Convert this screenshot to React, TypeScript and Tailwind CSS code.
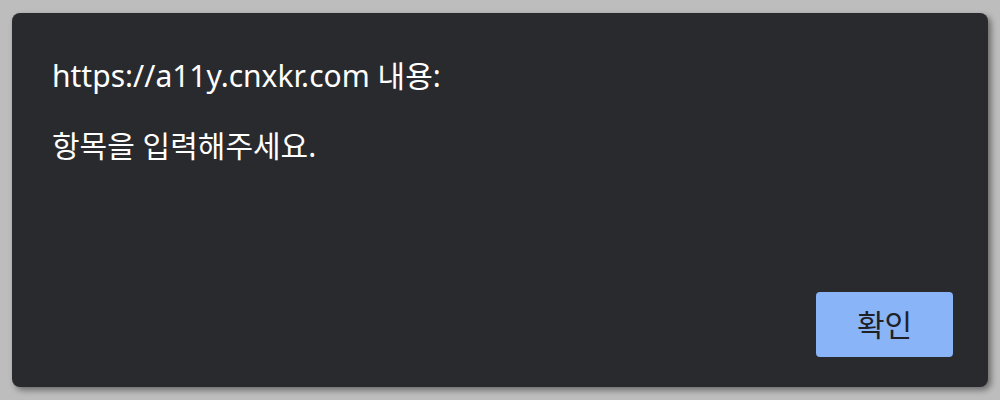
export default function App() {
  return (
    <div className="flex h-[400px] w-[1000px] bg-[#bdbdbd] pb-[13px] pl-3 pr-3 pt-[13px]">
      <div
        className="flex flex-1 flex-col rounded-lg bg-[#292a2e] pb-[30px] pl-10 pr-[35px] pt-[43px] text-[30px] text-white shadow-[3px_3px_6px_rgba(0,0,0,0.45)]"
        style={{ fontFamily: '"Noto Sans", "Noto Sans CJK KR", sans-serif' }}
      >
        <p className="leading-10">https://a11y.cnxkr.com 내용:</p>
        <p className="mt-[30px] leading-10">항목을 입력해주세요.</p>
        <div className="mt-auto flex justify-end">
          <button className="h-[65px] w-[137px] rounded-[4px] bg-[#8ab4f8] text-[30px] text-[#202124]">확인</button>
        </div>
      </div>
    </div>
  );
}
